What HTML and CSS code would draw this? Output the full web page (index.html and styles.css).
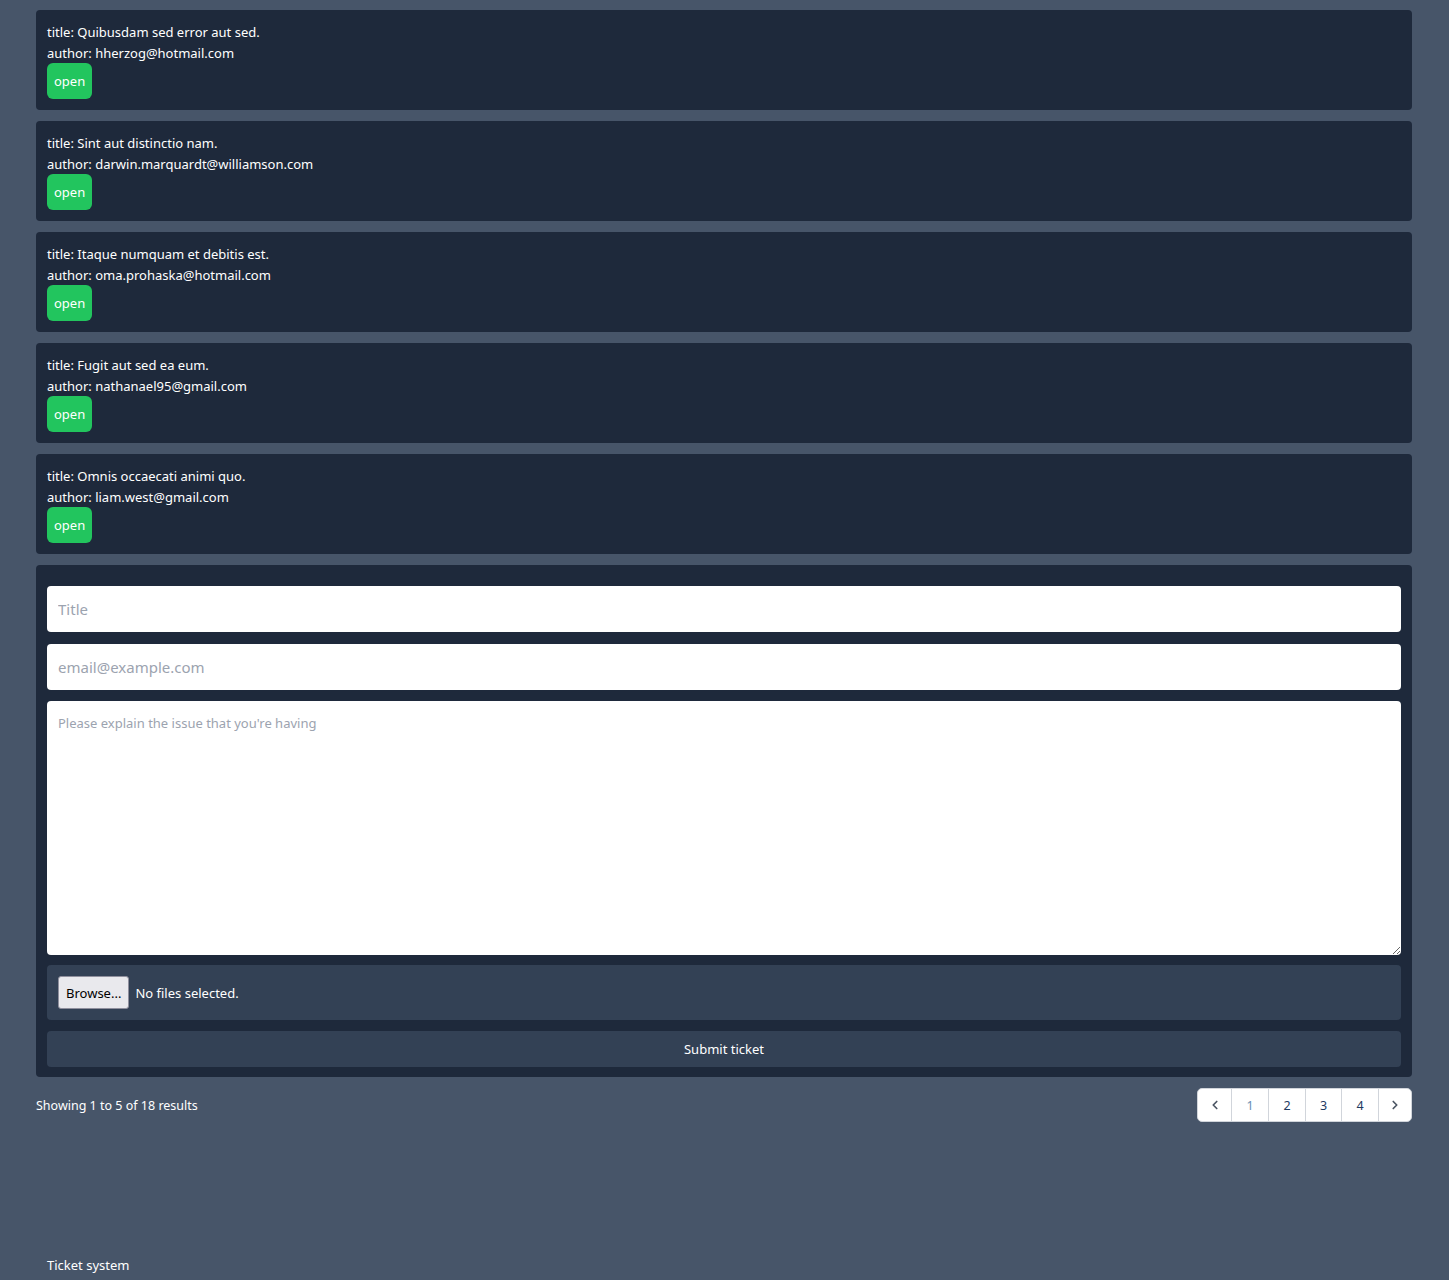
FILE: index.html
```html
<!DOCTYPE html>
<html lang="en">
<head>
<meta charset="utf-8">
<title>Ticket system</title>
<link rel="stylesheet" href="styles.css">
</head>
<body>
<div class="page">
  <main class="main">
    <ul class="tickets">
      <li class="ticket">
        <p class="line">title: Quibusdam sed error aut sed.</p>
        <p class="line">author: hherzog@hotmail.com</p>
        <span class="badge">open</span>
      </li>
      <li class="ticket">
        <p class="line">title: Sint aut distinctio nam.</p>
        <p class="line">author: darwin.marquardt@williamson.com</p>
        <span class="badge">open</span>
      </li>
      <li class="ticket">
        <p class="line">title: Itaque numquam et debitis est.</p>
        <p class="line">author: oma.prohaska@hotmail.com</p>
        <span class="badge">open</span>
      </li>
      <li class="ticket">
        <p class="line">title: Fugit aut sed ea eum.</p>
        <p class="line">author: nathanael95@gmail.com</p>
        <span class="badge">open</span>
      </li>
      <li class="ticket">
        <p class="line">title: Omnis occaecati animi quo.</p>
        <p class="line">author: liam.west@gmail.com</p>
        <span class="badge">open</span>
      </li>
    </ul>

    <form class="form">
      <input class="field" type="text" placeholder="Title">
      <input class="field" type="email" placeholder="email@example.com">
      <textarea class="area" placeholder="Please explain the issue that you're having"></textarea>
      <div class="filebox">
        <button type="button" class="browse">Browse...</button>
        <span class="nofile">No files selected.</span>
      </div>
      <button type="button" class="submit">Submit ticket</button>
    </form>

    <div class="pager-row">
      <p class="showing">Showing 1 to 5 of 18 results</p>
      <nav class="pager">
        <a class="pg pg-arrow" href="#"><svg width="14" height="14" viewBox="0 0 20 20"><path d="M12.5 5 L7.5 10 L12.5 15" fill="none" stroke="#4b5563" stroke-width="2.4" stroke-linecap="round" stroke-linejoin="round"/></svg></a>
        <a class="pg pg-num pg-active" href="#">1</a>
        <a class="pg pg-num" href="#">2</a>
        <a class="pg pg-num pg-narrow" href="#">3</a>
        <a class="pg pg-num" href="#">4</a>
        <a class="pg pg-arrow" href="#"><svg width="14" height="14" viewBox="0 0 20 20"><path d="M7.5 5 L12.5 10 L7.5 15" fill="none" stroke="#4b5563" stroke-width="2.4" stroke-linecap="round" stroke-linejoin="round"/></svg></a>
      </nav>
    </div>
  </main>
  <footer class="footer">Ticket system</footer>
</div>
</body>
</html>
```

FILE: styles.css
```css
* { box-sizing: border-box; }
html, body { margin: 0; padding: 0; }
body {
  background: #475569;
  color: #ffffff;
  font-family: "Noto Sans", "Open Sans", sans-serif;
  font-size: 13px;
}
.page {
  min-height: 1280px;
  display: flex;
  flex-direction: column;
}
.main {
  padding: 10px 37px 0 36px;
  display: flex;
  flex-direction: column;
  gap: 11px;
}
.tickets {
  list-style: none;
  margin: 0;
  padding: 0;
  display: flex;
  flex-direction: column;
  gap: 11px;
}
.ticket {
  background: #1e293b;
  border-radius: 4px;
  padding: 11px;
  height: 100px;
}
.line {
  margin: 0;
  line-height: 20px;
}
.line:first-child { line-height: 22px; }
.badge {
  display: inline-block;
  background: #22c55e;
  color: #fff;
  border-radius: 6px;
  padding: 8px 7px;
  line-height: 20px;
  font-size: 13px;
}
.form {
  background: #1e293b;
  border-radius: 4px;
  padding: 21px 11px 10px;
  display: flex;
  flex-direction: column;
  gap: 11px;
}
.field {
  height: 46px;
  border: 0;
  border-radius: 4px;
  background: #fff;
  padding: 0 11px;
  font-family: inherit;
  font-size: 15px;
  color: #111827;
  outline: none;
}
.field + .field { margin-top: 1px; }
.field::placeholder, .area::placeholder { color: #9ca3af; }
.area {
  height: 254px;
  border: 0;
  border-radius: 4px;
  background: #fff;
  padding: 13px 11px;
  font-family: inherit;
  font-size: 13px;
  resize: vertical;
  outline: none;
  display: block;
}
.filebox {
  background: #334155;
  border-radius: 4px;
  height: 55px;
  margin-top: -1px;
  padding: 0 11px;
  display: flex;
  align-items: center;
  gap: 6px;
}
.browse {
  height: 33px;
  padding: 0 7px;
  background: #e9e9ed;
  border: 1px solid #8f8f9d;
  border-radius: 3px;
  font-family: inherit;
  font-size: 13px;
  color: #000;
}
.nofile { color: #fff; font-size: 13px; }
.submit {
  height: 36px;
  background: #334155;
  border: 0;
  border-radius: 4px;
  color: #fff;
  font-family: inherit;
  font-size: 13px;
}
.pager-row {
  display: flex;
  justify-content: space-between;
  align-items: center;
  height: 34px;
}
.showing { margin: 0; font-size: 12.5px; }
.pager {
  display: flex;
  background: #fff;
  border: 1px solid #d1d5db;
  border-radius: 5px;
  height: 34px;
}
.pg {
  display: flex;
  align-items: center;
  justify-content: center;
  text-decoration: none;
  font-size: 12.5px;
  color: #1e3a5f;
}
.pg + .pg { border-left: 1px solid #d1d5db; }
.pg-arrow { width: 33px; }
.pg-num { width: 37px; }
.pg-narrow { width: 36px; }
.pg-active { color: #6b8fb5; }
.footer {
  margin-top: auto;
  padding: 0 47px 5px;
  line-height: 20px;
  font-size: 13px;
}
```
